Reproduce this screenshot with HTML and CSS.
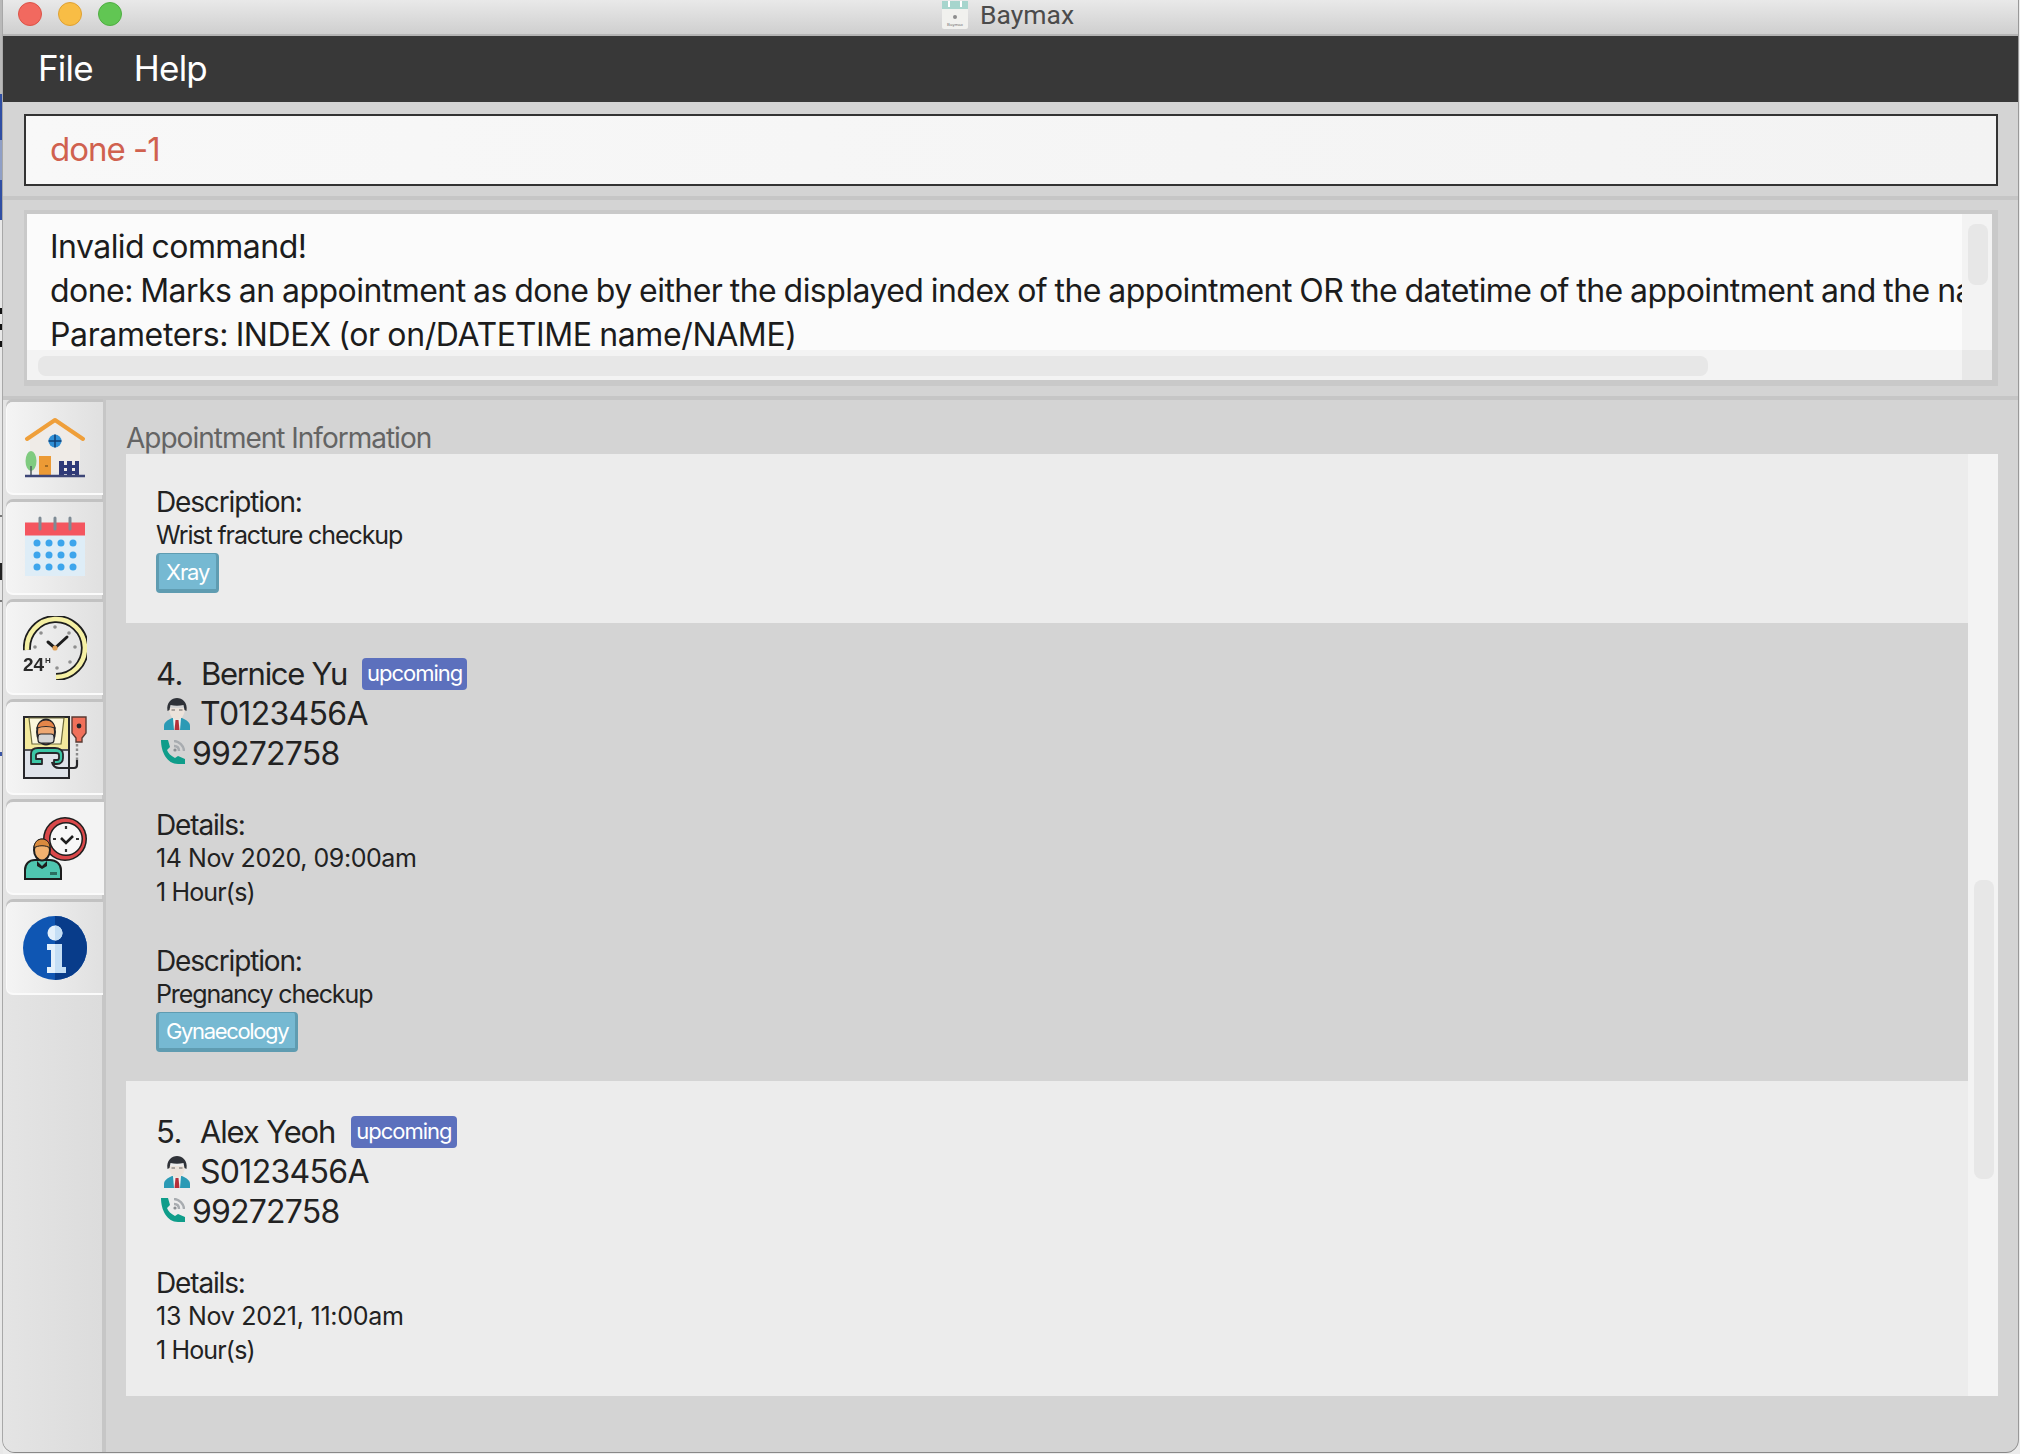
FILE: index.html
```html
<!DOCTYPE html>
<html lang="en">
<head>
<meta charset="utf-8">
<title>Baymax</title>
<link rel="stylesheet" href="styles.css">
</head>
<body>
<svg class="defs" width="0" height="0" aria-hidden="true">
  <defs>
    <symbol id="person" viewBox="0 0 26 32">
      <path d="M0 32v-4c0-4 4-6 8-8h10c4 2 8 4 8 8v4z" fill="#2b9ab5"/>
      <path d="M9 20h8l-1 12h-6z" fill="#eef2f2"/>
      <path d="M11.500 22h3l1 10h-5z" fill="#b5303a"/>
      <path d="M5 10c0 7 4 12 8 12s8-5 8-12z" fill="#ece3db"/>
      <path d="M3.500 13C2 4 8 0 13 0s11 4 9.500 13l-2-1-1-5c-4 1-9 1-13 0l-1 5z" fill="#2f3238"/>
      <path d="M7.500 12h3.500M15 12h3.500" stroke="#666" stroke-width="1.200"/>
    </symbol>
    <symbol id="phone" viewBox="0 0 24 24">
      <path d="M0 0h7l2 7-3 3c1 3 4 6 8 8l3-2 7 3v5h-7C6 24 0 12 0 0z" fill="#0f9d8a"/>
      <path d="M13 1c5 0 10 5 10 10M13 6c3 0 5 2 5 5" fill="none" stroke="#a8acb0" stroke-width="2.400"/>
      <circle cx="14" cy="10" r="1.600" fill="#8a8e92"/>
    </symbol>
  </defs>
</svg>
<div class="window">
  <header class="titlebar">
    <div class="lights">
      <span class="light red"></span>
      <span class="light yellow"></span>
      <span class="light green"></span>
    </div>
    <div class="app-name">
      <svg class="app-icon" viewBox="0 0 26 28">
        <rect x="0" y="0" width="26" height="28" rx="2" fill="#f1f1ee"/>
        <rect x="0" y="0" width="26" height="8" fill="#a7d5cd"/>
        <path d="M7 0v6M19 0v6" stroke="#fff" stroke-width="2"/>
        <circle cx="13" cy="16" r="2" fill="#8d8d8d"/>
        <text x="13" y="25" font-size="4.400" text-anchor="middle" fill="#777" class="svg-text">Baymax</text>
      </svg>
      <span>Baymax</span>
    </div>
  </header>

  <nav class="menubar">
    <span class="menu-item">File</span>
    <span class="menu-item">Help</span>
  </nav>

  <section class="command">
    <div class="command-input">done -1</div>
  </section>

  <section class="result">
    <div class="result-inner">
      <div class="result-text">
        <p>Invalid command!</p>
        <p>done: Marks an appointment as done by either the displayed index of the appointment OR the datetime of the appointment and the name of the patient.</p>
        <p>Parameters: INDEX (or on/DATETIME name/NAME)</p>
      </div>
      <div class="vbar"><div class="vthumb"></div></div>
      <div class="hbar"><div class="hthumb"></div></div>
      <div class="corner"></div>
    </div>
  </section>

  <main class="main">
    <aside class="sidebar">
      <div class="tab">
        <svg class="tab-icon" viewBox="0 0 64 64">
          <path d="M7 22L32 6l25 16v34H7z" fill="#efebe7"/>
          <path d="M4 23L32 4l28 19" fill="none" stroke="#ef9f3a" stroke-width="4" stroke-linecap="round" stroke-linejoin="round"/>
          <circle cx="32" cy="25" r="6.500" fill="#2f8fd6"/>
          <path d="M32 18.500v13M25.500 25h13" stroke="#123f73" stroke-width="1.500"/>
          <rect x="16" y="40" width="12" height="20" fill="#ec9a35"/>
          <path d="M22 50h3" stroke="#8a5a1c" stroke-width="1.500"/>
          <ellipse cx="8" cy="45" rx="5.500" ry="10" fill="#7fcb80"/>
          <path d="M8 50v10" stroke="#4d5a5e" stroke-width="1.500"/>
          <path d="M36 49h20v3H36zM36 55h20v3H36z" fill="#2f3a78"/>
          <path d="M36 45h5v15h-5zM44 45h5v15h-5zM52 45h4v15h-4z" fill="#2f3a78"/>
          <path d="M2 60h60" stroke="#3d4677" stroke-width="2.400"/>
        </svg>
      </div>
      <div class="tab">
        <svg class="tab-icon" viewBox="0 0 64 64">
          <rect x="2" y="19" width="60" height="41" fill="#deedf7"/>
          <rect x="2" y="6.500" width="60" height="13" fill="#f4555f"/>
          <path d="M17 2v11M32 2v11M47 2v11" stroke="#7e8b95" stroke-width="3" stroke-linecap="round"/>
          <g fill="#3da5ec">
            <circle cx="14" cy="27" r="3.500"/><circle cx="26" cy="27" r="3.500"/><circle cx="38" cy="27" r="3.500"/><circle cx="50" cy="27" r="3.500"/>
            <circle cx="14" cy="39" r="3.500"/><circle cx="26" cy="39" r="3.500"/><circle cx="38" cy="39" r="3.500"/><circle cx="50" cy="39" r="3.500"/>
            <circle cx="14" cy="51" r="3.500"/><circle cx="26" cy="51" r="3.500"/><circle cx="38" cy="51" r="3.500"/><circle cx="50" cy="51" r="3.500"/>
          </g>
        </svg>
      </div>
      <div class="tab">
        <svg class="tab-icon" viewBox="0 0 64 64">
          <path d="M4 34A29 29 0 1 1 33 61" fill="none" stroke="#1d1d1d" stroke-width="8"/>
          <path d="M4 34A29 29 0 1 1 33 61" fill="none" stroke="#f5f0a4" stroke-width="4.500"/>
          <g fill="#8f8f8f">
            <circle cx="32" cy="11" r="1.800"/><circle cx="18" cy="17" r="1.800"/><circle cx="46" cy="17" r="1.800"/><circle cx="12" cy="31" r="1.800"/><circle cx="52" cy="31" r="1.800"/><circle cx="47" cy="46" r="1.800"/><circle cx="34" cy="52" r="1.800"/>
          </g>
          <path d="M25 26l7 6 12-11" fill="none" stroke="#1d1d1d" stroke-width="3" stroke-linecap="round" stroke-linejoin="round"/>
          <circle cx="32" cy="32" r="2.600" fill="#e2a35a"/>
          <text x="0" y="55" font-size="19" font-weight="700" class="svg-text" fill="#2a2a2a">24</text>
          <text x="22" y="47" font-size="8" font-weight="700" class="svg-text" fill="#2a2a2a">H</text>
        </svg>
      </div>
      <div class="tab">
        <svg class="tab-icon" viewBox="0 0 64 64">
          <rect x="1" y="1" width="45" height="61" fill="#dfe3ea" stroke="#26262a" stroke-width="2"/>
          <path d="M2 2h43v31H2z" fill="#f3e99c"/>
          <path d="M6 2h35l-3 26H9z" fill="#fbf7dc" stroke="#6d6a3a" stroke-width="1.200"/>
          <path d="M2 34h43" stroke="#26262a" stroke-width="1.500"/>
          <ellipse cx="23" cy="16" rx="9" ry="12.500" fill="#eea872" stroke="#26262a" stroke-width="2"/>
          <path d="M14 12c1-6 5-8 9-8s8 2 9 8c-6-2-12-2-18 0z" fill="#e5864a" stroke="#26262a" stroke-width="1.200"/>
          <rect x="15" y="18" width="16" height="9" rx="3" fill="#d5d5d5" stroke="#26262a" stroke-width="1.200"/>
          <path d="M8 48V38c0-4 3-6 7-6h17c4 0 8 2 8 6v4c0 3-2 6-6 6h-3v-4h3c1 0 2-1 2-2v-3c0-1-1-2-3-2H17c-2 0-4 1-4 2v4h6v5z" fill="#3cc6a6" stroke="#26262a" stroke-width="1.800" stroke-linejoin="round"/>
          <path d="M29 46c1 4 3 6 7 6h15c2 0 3-1 3-3v-5" fill="none" stroke="#26262a" stroke-width="2.200"/>
          <path d="M54 28v17" stroke="#8b8b8b" stroke-width="2.400" stroke-dasharray="2.500 2"/>
          <path d="M49 1h14v16l-4 5v4h-6v-4l-4-5z" fill="#f0705a" stroke="#5a3a33" stroke-width="1.400"/>
          <circle cx="56" cy="10" r="2.400" fill="#26262a"/>
        </svg>
      </div>
      <div class="tab tab-active">
        <svg class="tab-icon" viewBox="0 0 64 64">
          <circle cx="41" cy="23" r="22" fill="#1d1d1d"/>
          <circle cx="41" cy="23" r="20.500" fill="#d9484a"/>
          <circle cx="42" cy="23" r="17" fill="#1d1d1d"/>
          <circle cx="42" cy="23" r="15.500" fill="#f7f7f7"/>
          <path d="M42 10v3M42 33v3M29 23h3M52 23h3" stroke="#333" stroke-width="2.200"/>
          <path d="M37 22l5 5 7-7" fill="none" stroke="#1d1d1d" stroke-width="2.600"/>
          <path d="M1 63v-9c0-6 4-10 10-10h15c6 0 11 4 11 10v9z" fill="#4fc6b0" stroke="#1d1d1d" stroke-width="2"/>
          <path d="M13 45l5 5 5-5v5l-5 3-5-3z" fill="#1d1d1d"/>
          <rect x="26" y="56" width="7" height="3" fill="#2b6d60"/>
          <ellipse cx="18" cy="34" rx="8" ry="10.500" fill="#f2b270" stroke="#1d1d1d" stroke-width="2"/>
          <path d="M10 32c0-6 4-9 8-9s8 3 8 9c-4-3-12-3-16 0z" fill="#d98a3e" stroke="#1d1d1d" stroke-width="1"/>
        </svg>
      </div>
      <div class="tab">
        <svg class="tab-icon" viewBox="0 0 64 64">
          <circle cx="32" cy="32" r="32" fill="#0f56b3"/>
          <path d="M32 0a32 32 0 0 1 0 64z" fill="#083c8a"/>
          <circle cx="32" cy="17" r="7.500" fill="#e3f0fb"/>
          <path d="M24 28h15v23h4v6H24v-6h4V34h-4z" fill="#e3f0fb"/>
          <path d="M32 9.500a7.500 7.500 0 0 1 0 15zM32 28h7v23h4v6H32z" fill="#c4def5"/>
        </svg>
      </div>
    </aside>

    <div class="panel">
      <h2 class="panel-title">Appointment Information</h2>
      <div class="list">
        <div class="cards">
          <article class="card">
            <div class="label">Description:</div>
            <div class="value">Wrist fracture checkup</div>
            <div class="tags"><span class="tag">Xray</span></div>
          </article>

          <article class="card card-alt">
            <div class="name-row"><span class="index">4.</span><span class="name">Bernice Yu</span><span class="badge">upcoming</span></div>
            <div class="info-row"><svg class="person-icon"><use href="#person"/></svg><span>T0123456A</span></div>
            <div class="info-row phone-row"><svg class="phone-icon"><use href="#phone"/></svg><span>99272758</span></div>
            <div class="label section">Details:</div>
            <div class="value value-date">14 Nov 2020, 09:00am</div>
            <div class="value value-hours">1 Hour(s)</div>
            <div class="label section">Description:</div>
            <div class="value">Pregnancy checkup</div>
            <div class="tags"><span class="tag tag-long">Gynaecology</span></div>
          </article>

          <article class="card">
            <div class="name-row"><span class="index">5.</span><span class="name">Alex Yeoh</span><span class="badge">upcoming</span></div>
            <div class="info-row"><svg class="person-icon"><use href="#person"/></svg><span>S0123456A</span></div>
            <div class="info-row phone-row"><svg class="phone-icon"><use href="#phone"/></svg><span>99272758</span></div>
            <div class="label section">Details:</div>
            <div class="value value-date date-loose">13 Nov 2021, 11:00am</div>
            <div class="value value-hours">1 Hour(s)</div>
          </article>
        </div>
        <div class="list-bar"><div class="list-thumb"></div></div>
      </div>
    </div>
  </main>
</div>
</body>
</html>
```
FILE: styles.css
```css
* { box-sizing: border-box; }
html, body { margin: 0; padding: 0; height: 100%; }
body {
  width: 2020px;
  height: 1454px;
  overflow: hidden;
  background-color: #ececec;
  background-repeat: no-repeat;
  background-size: 3px 100%;
  background-image:
    linear-gradient(180deg,
      #b9b9b9 0, #b9b9b9 94px,
      #2f4ea3 94px, #2f4ea3 140px,
      #8f9fc6 140px, #8f9fc6 180px,
      #2f4ea3 180px, #2f4ea3 220px,
      #e8e8e8 220px, #e8e8e8 308px,
      #111 308px, #111 314px,
      #e8e8e8 314px, #e8e8e8 324px,
      #111 324px, #111 330px,
      #e8e8e8 330px, #e8e8e8 341px,
      #111 341px, #111 347px,
      #e8e8e8 347px, #e8e8e8 515px,
      #777 515px, #777 517px,
      #e8e8e8 517px, #e8e8e8 563px,
      #222 563px, #222 580px,
      #e8e8e8 580px, #e8e8e8 600px,
      #777 600px, #777 602px,
      #e8e8e8 602px, #e8e8e8 752px,
      #3a55a5 752px, #3a55a5 756px,
      #e8e8e8 756px);
  font-family: Inter, "Liberation Sans", sans-serif;
  color: #222;
}
.defs { position: absolute; }
.svg-text { font-family: "Liberation Sans", sans-serif; }

.window {
  width: 2015px;
  height: 1452px;
  margin-left: 3px;
  display: flex;
  flex-direction: column;
  background: #d4d4d4;
  border-radius: 0 0 12px 12px;
  overflow: hidden;
  box-shadow: 0 1px 0 #888, 1px 0 0 #999, -1px 0 0 #a8a8a8;
}

.titlebar {
  height: 36px;
  flex: none;
  display: flex;
  align-items: center;
  position: relative;
  background: linear-gradient(180deg, #e9e9e9, #cfcfcf);
  border-bottom: 2px solid #b4b4b4;
}
.lights { display: flex; gap: 16px; margin-left: 15px; margin-top: -6px; }
.light { width: 24px; height: 24px; border-radius: 50%; }
.red { background: #f2695f; border: 1px solid #dc5347; }
.yellow { background: #f8bd45; border: 1px solid #dfa133; }
.green { background: #61c653; border: 1px solid #4fae42; }
.app-name {
  position: absolute;
  left: 939px;
  top: 0;
  display: flex;
  align-items: center;
  gap: 12px;
  height: 29px;
  font-family: Roboto, sans-serif;
  font-size: 26.500px;
  color: #4b4b4b;
}
.app-icon { width: 26px; height: 28px; }

.menubar {
  height: 66px;
  flex: none;
  background: #383838;
  display: flex;
  align-items: center;
  gap: 41px;
  padding: 0 0 2px 35px;
}
.menu-item { color: #fff; font-size: 35px; letter-spacing: -0.800px; }

.command {
  flex: none;
  height: 94px;
  padding: 12px 20px 10px 21px;
}
.command-input {
  height: 72px;
  border: 2px solid #333;
  background: linear-gradient(90deg, #f8f8f8, #f3f3f3);
  color: #d0614f;
  font-size: 33px;
  letter-spacing: -1px;
  line-height: 66px;
  padding-left: 24px;
}

.result {
  flex: none;
  height: 204px;
  padding: 10px 20px 10px 21px;
  background: #d4d4d4;
  border-top: 4px solid #c6c6c6;
  border-bottom: 4px solid #c6c6c6;
}
.result-inner {
  height: 176px;
  border-style: solid;
  border-color: #c9c9c9;
  border-width: 4px 6px 6px 3px;
  display: grid;
  grid-template-columns: minmax(0, 1fr) 30px;
  grid-template-rows: 136px 30px;
  background: #f3f3f3;
}
.result-text {
  background: #fbfbfb;
  overflow-x: clip;
  overflow-y: visible;
  padding: 17px 0 0 23px;
  display: flex;
  flex-direction: column;
  gap: 12px;
  white-space: nowrap;
  font-size: 32px;
  letter-spacing: -0.550px;
  word-spacing: -1px;
  line-height: 32px;
  color: #1c1c1c;
}
.result-text p { margin: 0; }
.result-text p:last-child { letter-spacing: -0.370px; }
.vbar { background: #f3f3f3; padding: 10px 4px 0 6px; }
.vthumb { height: 61px; background: #e7e7e7; border-radius: 8px; }
.hbar { background: #f3f3f3; padding: 6px 0 4px 11px; }
.hthumb { width: 1670px; height: 20px; background: #e7e7e7; border-radius: 8px; }
.corner { background: #e8e8e8; }

.main { flex: 1; min-height: 0; display: flex; }
.sidebar {
  width: 103px;
  flex: none;
  border-right: 4px solid #c6c6c6;
  background: linear-gradient(90deg, #e4e4e4, #dcdcdc);
  padding: 2px 0 0 3px;
  display: flex;
  flex-direction: column;
  gap: 7px;
}
.tab {
  height: 93px;
  flex: none;
  margin-right: -1px;
  display: flex;
  align-items: center;
  justify-content: center;
  background: linear-gradient(90deg, #f4f4f4, #e0e0e0);
  border-radius: 7px 0 0 7px;
  border-left: 1px solid #fafafa;
  border-bottom: 2px solid #fafafa;
  box-shadow: 0 -3px 0 #c2c2c2;
}
.tab-active { background: #f3f3f3; margin-right: -2px; }
.tab-icon { width: 64px; height: 64px; filter: blur(0.5px); }

.panel {
  flex: 1;
  min-width: 0;
  padding: 22px 20px 56px 20px;
  display: flex;
  flex-direction: column;
}
.panel-title {
  margin: 0;
  height: 32px;
  font-size: 28px;
  font-weight: 400;
  line-height: 33px;
  letter-spacing: -1px;
  color: #646464;
}
.list { flex: 1; min-height: 0; display: flex; background: #f3f3f3; overflow: hidden; }
.cards { flex: 1; min-width: 0; }
.list-bar { width: 30px; flex: none; padding: 426px 4px 0 6px; }
.list-thumb { height: 299px; background: #e7e7e7; border-radius: 8px; }

.card { background: #ececec; padding: 31px 0 29px 30px; }
.card-alt { background: #d4d4d4; }
.card:first-child { padding-bottom: 30px; }

.name-row { display: flex; align-items: center; height: 40px; font-size: 31px; letter-spacing: -0.500px; padding-bottom: 2px; }
.name { letter-spacing: -1.300px; }
.card:last-child .name { letter-spacing: -1.150px; }
.index { width: 45px; }
.card:last-child .index { width: 44px; }
.badge {
  margin-left: 15px;
  height: 32px;
  padding: 0 5px;
  border-radius: 4px;
  background: #5c70bd;
  color: #fff;
  font-size: 22px;
  line-height: 30px;
  letter-spacing: -1px;
  position: relative;
  top: 1px;
}
.card:last-child .badge { margin-left: 16px; }
.info-row { display: flex; align-items: center; height: 40px; font-size: 32px; letter-spacing: -0.700px; }
.info-row span { margin-top: -1px; }
.phone-row { letter-spacing: -0.800px; }
.person-icon { width: 26px; height: 32px; margin-left: 8px; margin-right: 10px; }
.phone-icon { width: 24px; height: 24px; margin-left: 5px; margin-right: 7px; margin-top: -4px; }
.label { height: 34px; line-height: 34px; font-size: 28px; letter-spacing: -1.150px; }
.section { margin-top: 34px; }
.value { height: 34px; line-height: 33px; font-size: 25px; letter-spacing: -1.100px; }
.value-date { letter-spacing: -0.450px; }
.date-loose { letter-spacing: -0.250px; }
.value-hours { letter-spacing: -0.850px; }
.tags { display: flex; }
.tag {
  height: 40px;
  padding: 0 7px;
  border-radius: 4px;
  background: #76b9d2;
  border: solid #5f9cb1;
  border-width: 1px 3px 4px 3px;
  color: #fff;
  font-size: 22px;
  line-height: 37px;
  letter-spacing: -1.100px;
}
.tag-long { letter-spacing: -1.350px; }
```
